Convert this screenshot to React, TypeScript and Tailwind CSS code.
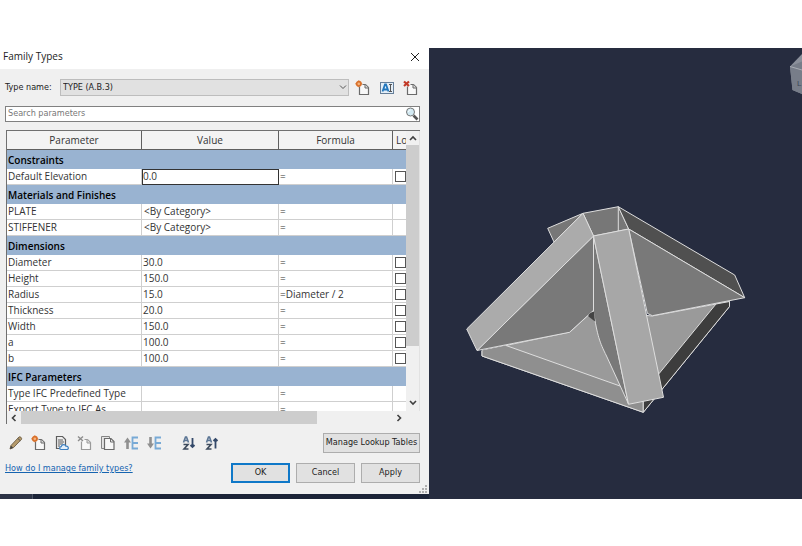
import type { ReactNode } from "react";

type Entry =
  | { kind: "group"; name: string }
  | { kind: "param"; name: string; value?: string; formula?: string; lock?: boolean; focused?: boolean; indent?: boolean };

const entries: Entry[] = [
  { kind: "group", name: "Constraints" },
  { kind: "param", name: "Default Elevation", value: "0.0", lock: true, focused: true },
  { kind: "group", name: "Materials and Finishes" },
  { kind: "param", name: "PLATE", value: "<By Category>", indent: true },
  { kind: "param", name: "STIFFENER", value: "<By Category>", indent: true },
  { kind: "group", name: "Dimensions" },
  { kind: "param", name: "Diameter", value: "30.0", lock: true },
  { kind: "param", name: "Height", value: "150.0", lock: true },
  { kind: "param", name: "Radius", value: "15.0", formula: "Diameter / 2", lock: true },
  { kind: "param", name: "Thickness", value: "20.0", lock: true },
  { kind: "param", name: "Width", value: "150.0", lock: true },
  { kind: "param", name: "a", value: "100.0", lock: true },
  { kind: "param", name: "b", value: "100.0", lock: true },
  { kind: "group", name: "IFC Parameters" },
  { kind: "param", name: "Type IFC Predefined Type" },
  { kind: "param", name: "Export Type to IFC As" },
];

function Icon({ children }: { children: ReactNode }) {
  return (
    <svg viewBox="0 0 16 16" className="size-4" fill="none" aria-hidden="true">
      {children}
    </svg>
  );
}

const Page = ({ stroke = "#6b6b6b" }: { stroke?: string }) => (
  <>
    <path d="M4.500 6.500v8h9v-7l-3-3h-3" fill="#f8f8f8" stroke={stroke} strokeWidth="1.200" />
    <path d="M10 4.500v3.500h3.500" fill="#dcdcdc" stroke={stroke} />
  </>
);

const NewIcon = () => (
  <Icon>
    <Page />
    <circle cx="3.800" cy="3.800" r="2.200" fill="#f4b27c" stroke="#d9702a" strokeWidth="1.700" />
    <path d="M3.800.4v1M3.800 6.200v1M.4 3.800h1M6.200 3.800h1" stroke="#d9702a" />
  </Icon>
);

const RenameIcon = () => (
  <Icon>
    <rect x="1.500" y="2.500" width="13" height="11" fill="#e3eef8" stroke="#667f99" />
    <path d="M3.500 11.500 6 4.500h1l2.500 7M4.500 9.500h4" stroke="#2277bd" strokeWidth="1.800" />
    <path d="M10 4.500h3M11.500 4.500v7M10 11.500h3" stroke="#555" />
  </Icon>
);

const DeleteIcon = ({ muted = false }: { muted?: boolean }) => (
  <Icon>
    <Page stroke={muted ? "#9a9a9a" : "#6b6b6b"} />
    <path d="m1 1.500 5 4.500m0-4.500-5 4.500" stroke={muted ? "#8c8c8c" : "#c23a28"} strokeWidth={muted ? 1.400 : 2.200} />
  </Icon>
);

const PencilIcon = () => (
  <Icon>
    <path d="m2 14 1-3.500 8-8.500c1-.9 3.300 1 2.500 2.300l-8 8.300z" fill="#b59a6b" stroke="#76654a" />
    <path d="m2 14 1-3.300 2.300 2z" fill="#444" />
    <path d="m9.800 3.500 2.500 2.200" stroke="#555" />
  </Icon>
);

const CloudPageIcon = () => (
  <Icon>
    <path d="M2.500 1.500h6l3 3v9h-9z" fill="#eee" stroke="#5d5d5d" strokeWidth="1.200" />
    <path d="M4 5h5M4 7h6M4 9h5M4 11h2" stroke="#5d5d5d" strokeWidth="1.200" />
    <path d="M7 14.500c-2-.3-1.700-2.800.2-2.900.5-2.600 4-2.700 4.600-.5 3-.3 3.300 3.200 1.200 3.400z" fill="#e5f0fb" stroke="#3c7fc0" strokeWidth="1.200" />
  </Icon>
);

const CopyIcon = () => (
  <Icon>
    <path d="M1.500 1.500h8v2h-5v10h-3z" fill="#e5e5e5" stroke="#858585" />
    <path d="M4.500 3.500h6.500l3 3v8H4.500z" fill="#f8f8f8" stroke="#6b6b6b" strokeWidth="1.200" />
    <path d="M10.500 3.500v3.500h3.500" stroke="#6b6b6b" />
  </Icon>
);

const MoveIcon = ({ down = false }: { down?: boolean }) => (
  <Icon>
    <path d={down ? "M4.500 2v7" : "M4.500 14V7"} stroke="#909090" strokeWidth="2.600" />
    <path d={down ? "M1 8.500h7l-3.500 5z" : "M1 7.500h7l-3.500-5z"} fill="#909090" />
    <path d="M15 2.500H9.500v11H15M9.500 8H15" stroke="#78aad6" strokeWidth="1.800" />
  </Icon>
);

const SortIcon = ({ up = false }: { up?: boolean }) => (
  <Icon>
    <path d="M2.500 7.500 4.500 2h1l2 5.500M3.500 5.500h3" stroke="#5b7594" strokeWidth="1.600" />
    <path d="M2.500 9.500h4.500L3 14h4.500" stroke="#3c4a5c" strokeWidth="1.600" />
    <path d={up ? "M11.500 13.500v-9M9.500 6l2-2 2 2" : "M11.500 3v9M9.500 10l2 2 2-2"} stroke="#34496a" strokeWidth="1.800" />
  </Icon>
);

const Chevron = ({ d }: { d: string }) => (
  <svg viewBox="0 0 10 10" className="size-2.5" fill="none" aria-hidden="true">
    <path d={d} stroke="#404040" strokeWidth="1.600" />
  </svg>
);

function IconButton({ label, children }: { label: string; children: ReactNode }) {
  return (
    <button type="button" aria-label={label} title={label} className="flex size-4 shrink-0 items-center justify-center">
      {children}
    </button>
  );
}

const cell = "h-4 overflow-hidden p-0 whitespace-nowrap";
const textCell = "pb-0.5 leading-3";
const gridLine = "border-r border-b border-[#cfcfcf]";

function ParameterTable() {
  return (
    <div className="grid grid-cols-[1fr_14px] grid-rows-[280px_13px] border-t border-l border-[#707070]">
      <div className="overflow-hidden">
        <table className="w-[423px] table-fixed border-separate border-spacing-0 bg-white text-[10px] text-[#333]">
          <colgroup>
            <col className="w-[135px]" />
            <col className="w-[137px]" />
            <col className="w-[114px]" />
            <col />
          </colgroup>
          <thead>
            <tr className="h-[19px] bg-[#f3f3f3] leading-[18px]">
              <th className="border-r border-b border-[#606060] p-0 font-normal">Parameter</th>
              <th className="border-r border-b border-[#606060] p-0 font-normal">Value</th>
              <th className="border-r border-b border-[#606060] p-0 font-normal">Formula</th>
              <th className="border-b border-[#606060] p-0 pl-[3px] text-left font-normal">Lock</th>
            </tr>
          </thead>
          <tbody>
            {entries.map((e) =>
              e.kind === "group" ? (
                <tr key={e.name}>
                  <th colSpan={4} className="h-[19px] bg-[#99b3d1] p-0 pt-px pl-px text-left leading-[18px] font-semibold text-black">
                    {e.name}
                  </th>
                </tr>
              ) : (
                <tr key={e.name}>
                  <td className={`${cell} ${textCell} ${gridLine} pl-px`}>{e.name}</td>
                  <td className={`${cell} ${textCell} ${e.focused ? "border border-[#333]" : gridLine} ${e.indent ? "pl-0.5" : e.focused ? "pl-0" : "pl-px"}`}>
                    {e.value}
                  </td>
                  <td className={`${cell} ${textCell} ${gridLine} pl-px`}>={e.formula}</td>
                  <td className={`${cell} border-b border-[#cfcfcf] pl-0.5`}>
                    {e.lock && (
                      <input
                        type="checkbox"
                        aria-label={`Lock ${e.name}`}
                        className="block size-[11px] appearance-none border border-[#555] bg-white"
                      />
                    )}
                  </td>
                </tr>
              ),
            )}
          </tbody>
        </table>
      </div>
      <div className="flex flex-col items-center border-r border-[#e2e2e2] bg-[#f0f0f0]">
        <button type="button" aria-label="Scroll up" className="flex h-3.5 items-center"><Chevron d="m2 7 3-3 3 3" /></button>
        <div className="h-[201px] w-full bg-[#cdcdcd]" />
        <button type="button" aria-label="Scroll down" className="mt-auto flex h-4 items-center"><Chevron d="m2 3 3 3 3-3" /></button>
      </div>
      <div className="flex items-center bg-[#f0f0f0]">
        <button type="button" aria-label="Scroll left" className="flex w-3.5 justify-center"><Chevron d="M6.500 2 3.500 5l3 3" /></button>
        <div className="h-full w-[296px] bg-[#cdcdcd]" />
        <button type="button" aria-label="Scroll right" className="mr-0.5 ml-auto flex"><Chevron d="m3.500 2 3 3-3 3" /></button>
      </div>
      <div className="bg-[#f0f0f0]" />
    </div>
  );
}

const pushButton = "h-5 border border-[#adadad] bg-[#e1e1e1] text-center";

function FamilyTypesDialog() {
  return (
    <section aria-label="Family Types" className="flex w-[429px] shrink-0 flex-col bg-[#f0f0f0] font-['Open_Sans','Noto_Sans',sans-serif] text-[#222]">
      <header className="flex h-[21px] items-center justify-between bg-white pr-2 pb-1 pl-[3px] text-[10px]">
        <h1>Family Types</h1>
        <button type="button" aria-label="Close">
          <svg viewBox="0 0 12 12" className="size-3" aria-hidden="true">
            <path d="m2 2 8 8m0-8-8 8" stroke="#222" />
          </svg>
        </button>
      </header>

      <div className="flex flex-col pr-[9px] pl-[5px] font-['DejaVu_Sans_Condensed','DejaVu_Sans',sans-serif] text-[9px]">
        <div className="flex items-center pt-2.5">
          <label htmlFor="type-name" className="w-[55px] shrink-0">Type name:</label>
          <div className="relative grow">
            <select id="type-name" className="block h-[17px] w-full appearance-none border border-[#bdbdbd] bg-[#e1e1e1] pl-0.5">
              <option>TYPE (A.B.3)</option>
            </select>
            <svg viewBox="0 0 8 8" className="pointer-events-none absolute top-1 right-0.5 size-2" fill="none" aria-hidden="true">
              <path d="m1 2.500 3 3 3-3" stroke="#555" />
            </svg>
          </div>
          <div className="flex gap-2 pr-px pl-1.5">
            <IconButton label="New type"><NewIcon /></IconButton>
            <IconButton label="Rename type"><RenameIcon /></IconButton>
            <IconButton label="Delete type"><DeleteIcon /></IconButton>
          </div>
        </div>

        <div className="mt-2.5 mb-2 flex h-4 items-center border border-[#808080] bg-white">
          <input type="text" aria-label="Search parameters" placeholder="Search parameters" className="h-full grow pb-0.5 pl-0.5 outline-none placeholder:text-[#777]" />
          <button type="button" aria-label="Search">
            <svg viewBox="0 0 14 14" className="size-3.5" fill="none" aria-hidden="true">
              <path d="m8.500 8.500 4 4" stroke="#555" strokeWidth="2.600" />
              <circle cx="5.500" cy="5" r="4" fill="#d3eaf3" stroke="#777" />
              <path d="M3.500 5c0-1.300.8-2 2-2" stroke="#fff" />
            </svg>
          </button>
        </div>

        <div className="ml-px font-['Open_Sans','Noto_Sans',sans-serif]"><ParameterTable /></div>

        <div className="mt-[9px] flex h-5 items-center">
          <div className="flex gap-[7px] pl-[3px]">
            <IconButton label="Edit parameter"><PencilIcon /></IconButton>
            <IconButton label="New parameter"><NewIcon /></IconButton>
            <IconButton label="Shared parameter"><CloudPageIcon /></IconButton>
            <IconButton label="Delete parameter"><DeleteIcon muted /></IconButton>
            <IconButton label="Copy parameter"><CopyIcon /></IconButton>
            <IconButton label="Move up"><MoveIcon /></IconButton>
            <IconButton label="Move down"><MoveIcon down /></IconButton>
          </div>
          <div className="ml-[19px] flex gap-[7px]">
            <IconButton label="Sort ascending"><SortIcon /></IconButton>
            <IconButton label="Sort descending"><SortIcon up /></IconButton>
          </div>
          <button type="button" className={`${pushButton} ml-auto w-[97px]`}>Manage Lookup Tables</button>
        </div>

        <div className="mt-2.5 flex">
          <a href="#help" className="mr-auto leading-[11px] text-[#1664b0] underline">How do I manage family types?</a>
          <div className="flex gap-1.5">
            <button type="button" className="h-5 w-[59px] border-2 border-[#0f78c8] bg-[#e1e1e1]">OK</button>
            <button type="button" className={`${pushButton} w-[59px]`}>Cancel</button>
            <button type="button" className={`${pushButton} w-[59px]`}>Apply</button>
          </div>
        </div>
      </div>
      <svg viewBox="0 0 9 9" className="mt-0.5 mr-px size-[9px] self-end" fill="#b0b0b0" aria-hidden="true">
        <path d="M6 0h2v2H6zM3 3h2v2H3zM6 3h2v2H6zM0 6h2v2H0zM3 6h2v2H3zM6 6h2v2H6z" />
      </svg>
    </section>
  );
}

function ModelView() {
  return (
    <svg viewBox="429 48 373 451" className="min-w-0 flex-1" role="img" aria-label="3D view of the family">
      <g stroke="#dedede" strokeLinejoin="round" strokeWidth="1">
        <path d="M547.700 228.300 583 213.300 554 242z" fill="#777" />
        <path d="M482 350.500 570 332l24-22 58 6 77.500-14.500v5L643.300 412.300 482 356z" fill="#9a9a9a" />
        <path d="M482 350.500v5.500l161.300 56.300V401L620 386 506 345.500z" fill="#8f8f8f" stroke="none" />
        <path d="M506 345.500 620 386M482 350.500v5.500l161.300 56.300V401" fill="none" />
        <path d="m716 304 13.500-2.500v5L643.300 412.300V392l16-18.700z" fill="#3d3d3d" />
        <path d="M593.500 236 477 350.500l92.500-18.200 24-22z" fill="#797979" />
        <path d="m593.500 236 35 168-22-48c-7-14-9-20-13-44z" fill="#797979" />
        <path d="m583 213.300 35.300-6.600 10.400 22.300-35.200 7z" fill="#777" />
        <path d="M618.300 206.700v24.500" />
        <path d="m618.300 206.700 116.400 68.300 10 22.700L628.700 229z" fill="#505050" />
        <path d="m628.700 229 116 68.700-92.400 18-5-2.400z" fill="#797979" />
        <path d="m583 213.300 10.500 22.700L477 350.500 466.700 329z" fill="#ababab" />
        <path d="m593.500 236 35.200-7 34.800 168.300-35 7z" fill="#a7a7a7" />
      </g>
      <path d="M594 311.500c-4 1-6 3-5.500 5l6.500 5z" fill="#444" />
      <path d="m802 54-12 12.500 2.500 23.500 9.500 4z" fill="#8b909b" />
      <path d="m790 66.500 12-5v32.500l-9.500-4z" fill="#777d89" />
      <path d="m790 66.500 12 3.500" stroke="#a9adb5" />
      <text x="797" y="86" fontSize="8" fill="#3e4656" className="font-['Liberation_Sans',sans-serif]">L</text>
    </svg>
  );
}

export default function App() {
  return (
    <main className="bg-white py-12">
      <div className="flex bg-[#262c3f]">
        <div className="flex shrink-0 flex-col">
          <FamilyTypesDialog />
          <div className="flex h-[5px] bg-[#1c2438]">
            <div className="w-[33px] border-r border-[#4b5365] bg-[#2c3346]" />
          </div>
        </div>
        <ModelView />
      </div>
    </main>
  );
}
